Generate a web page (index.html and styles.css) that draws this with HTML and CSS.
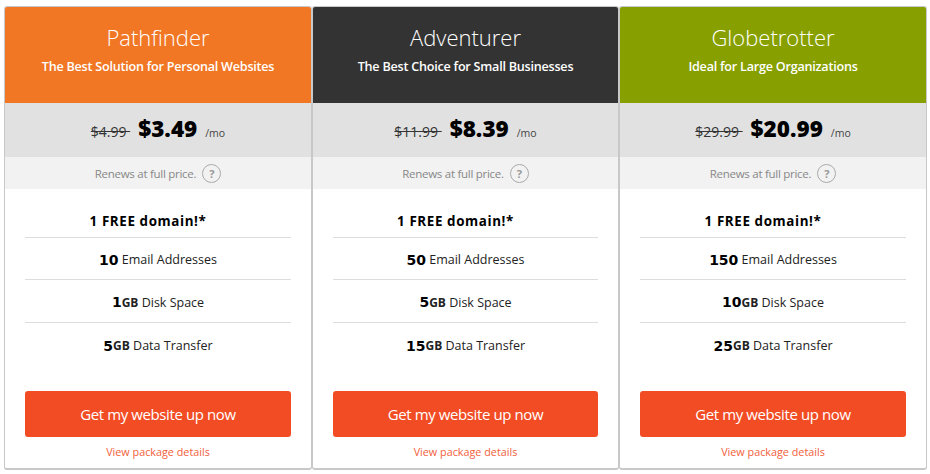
FILE: index.html
```html
<!DOCTYPE html>
<html lang="en">
<head>
<meta charset="utf-8">
<title>Plans</title>
<link rel="stylesheet" href="styles.css">
</head>
<body>
<main class="plans">
  <section class="card">
    <header class="head orange"><h2>Pathfinder</h2><p>The Best Solution for Personal Websites</p></header>
    <div class="price"><s>$4.99&nbsp;</s><strong>$3.49</strong><small>/mo</small></div>
    <div class="renew"><span>Renews at full price.</span><i class="help">?</i></div>
    <ul class="features">
      <li class="domain"><b>1 FREE domain!*</b></li>
      <li><b class="num">10</b> Email Addresses</li>
      <li><b class="num">1</b><b class="unit">GB</b> Disk Space</li>
      <li><b class="num">5</b><b class="unit">GB</b> Data Transfer</li>
    </ul>
    <a class="cta" href="#">Get my website up now</a>
    <a class="details" href="#">View package details</a>
  </section>
  <section class="card">
    <header class="head dark"><h2>Adventurer</h2><p>The Best Choice for Small Businesses</p></header>
    <div class="price"><s>$11.99&nbsp;</s><strong>$8.39</strong><small>/mo</small></div>
    <div class="renew"><span>Renews at full price.</span><i class="help">?</i></div>
    <ul class="features">
      <li class="domain"><b>1 FREE domain!*</b></li>
      <li><b class="num">50</b> Email Addresses</li>
      <li><b class="num">5</b><b class="unit">GB</b> Disk Space</li>
      <li><b class="num">15</b><b class="unit">GB</b> Data Transfer</li>
    </ul>
    <a class="cta" href="#">Get my website up now</a>
    <a class="details" href="#">View package details</a>
  </section>
  <section class="card">
    <header class="head green"><h2>Globetrotter</h2><p>Ideal for Large Organizations</p></header>
    <div class="price"><s>$29.99&nbsp;</s><strong>$20.99</strong><small>/mo</small></div>
    <div class="renew"><span>Renews at full price.</span><i class="help">?</i></div>
    <ul class="features">
      <li class="domain"><b>1 FREE domain!*</b></li>
      <li><b class="num">150</b> Email Addresses</li>
      <li><b class="num">10</b><b class="unit">GB</b> Disk Space</li>
      <li><b class="num">25</b><b class="unit">GB</b> Data Transfer</li>
    </ul>
    <a class="cta" href="#">Get my website up now</a>
    <a class="details" href="#">View package details</a>
  </section>
</main>
</body>
</html>
```
FILE: styles.css
```css
* { box-sizing: border-box; }
html, body { margin: 0; background: #fff; }
body { font-family: "Open Sans", "Liberation Sans", sans-serif; color: #111; padding: 6px 0 0 4px; width: 930px; height: 474px; overflow: hidden; }
.plans { display: grid; grid-template-columns: 308px 307px 308px; width: 923px; height: 464px; }
.card { display: flex; flex-direction: column; border: 1px solid #c8c8c8; border-bottom-width: 2px; border-radius: 3px; background: #fff; }
.head { height: 96px; padding-top: 14px; text-align: center; color: #fff; border-radius: 2px 2px 0 0; }
.orange { background: #f17724; }
.dark { background: #333; }
.green { background: #87a000; }
.head h2 { margin: 0; font-size: 22px; font-weight: 300; line-height: 32px; }
.head p { margin: 5px 0 0; font-size: 12.6px; font-weight: 600; line-height: 18px; letter-spacing: -0.23px; }
.price { height: 54px; background: #e1e1e1; display: flex; justify-content: center; align-items: baseline; padding-top: 12px; line-height: 28px; }
.price s { font-size: 14px; color: #333; margin-right: 8px; }
.price strong { font-size: 22.5px; font-weight: 800; color: #000; }
.price small { font-size: 10.5px; margin-left: 8px; color: #444; }
.renew { height: 32px; background: #f2f2f2; display: flex; justify-content: center; align-items: center; gap: 6px; font-size: 11.5px; letter-spacing: -0.28px; color: #888; }
.help { width: 19px; height: 19px; border: 1px solid #aaa; border-radius: 50%; display: flex; align-items: center; justify-content: center; font-style: normal; font-weight: 700; font-size: 11px; color: #999; }
.features { list-style: none; margin: 0 20px; padding: 0; height: 202px; }
.features li { height: 43px; padding-top: 2px; border-bottom: 1px solid #ddd; display: flex; justify-content: center; align-items: center; font-size: 12.5px; color: #222; white-space: pre; }
.features .domain { height: 49px; padding: 16px 20px 0 0; font-size: 13.4px; letter-spacing: 0.6px; color: #000; }
.features .domain + li { height: 42px; }
.features li:last-child { border-bottom: 0; }
.features b { font-weight: 600; }
.features .domain b { font-weight: 700; }
.features .num { font-family: "DejaVu Sans", sans-serif; font-weight: 700; font-size: 14px; color: #000; }
.features .unit { font-weight: 700; font-size: 12px; color: #222; }
.cta { display: flex; align-items: center; justify-content: center; margin: 0 20px; height: 46px; background: #f24c24; color: #fff; border-radius: 3px; font-size: 15px; letter-spacing: -0.4px; text-decoration: none; }
.details { display: block; margin-top: 7px; text-align: center; font-size: 10.8px; line-height: 16px; color: #f2603c; text-decoration: none; }
```
